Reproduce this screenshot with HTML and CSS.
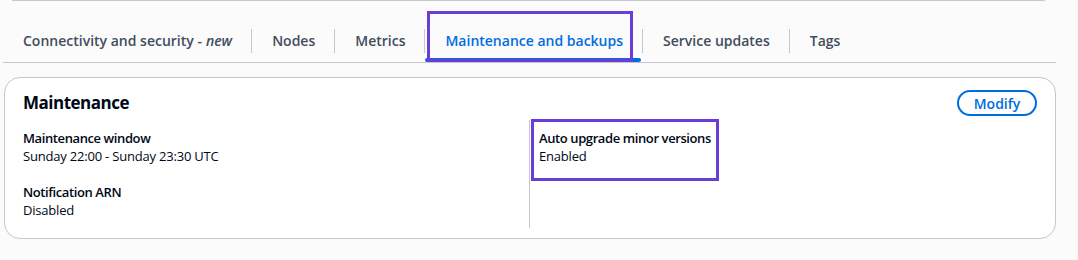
FILE: index.html
```html
<!DOCTYPE html>
<html>
<head>
<meta charset="utf-8">
<link rel="stylesheet" href="styles.css">
</head>
<body>
<div class="prev-edge"></div>
<div class="tabs">
  <div class="tab">Connectivity and security - <em>new</em></div>
  <span class="sep"></span>
  <div class="tab">Nodes</div>
  <span class="sep"></span>
  <div class="tab">Metrics</div>
  <span class="sep"></span>
  <div class="tab active">Maintenance and backups<span class="underline"></span><span class="mark mark-tab"></span></div>
  <span class="sep"></span>
  <div class="tab">Service updates</div>
  <span class="sep"></span>
  <div class="tab">Tags</div>
</div>
<section class="card">
  <div class="card-header">
    <h2>Maintenance</h2>
    <button class="btn">Modify</button>
  </div>
  <div class="columns">
    <div class="col">
      <div class="kv">
        <div class="label">Maintenance window</div>
        <div class="value">Sunday 22:00 - Sunday 23:30 UTC</div>
      </div>
      <div class="kv">
        <div class="label">Notification ARN</div>
        <div class="value">Disabled</div>
      </div>
    </div>
    <div class="col col-right">
      <div class="kv">
        <div class="label">Auto upgrade minor versions</div>
        <div class="value">Enabled</div>
      </div>
      <span class="mark mark-kv"></span>
    </div>
  </div>
</section>
</body>
</html>
```

FILE: styles.css
```css
* { box-sizing: border-box; }
html, body {
  margin: 0;
  padding: 0;
  background: #fbfbfb;
  font-family: "Open Sans", "Liberation Sans", Arial, sans-serif;
  color: #000716;
}
.prev-edge {
  margin-left: 12px;
  width: 1033px;
  height: 1px;
  background: #c6c6cd;
  border-radius: 0 0 2px 0;
}
.tabs {
  display: flex;
  align-items: center;
  margin-left: 3px;
  width: 1053px;
  padding-top: 18px;
  border-bottom: 1px solid #c6c6cd;
}
.tab {
  position: relative;
  height: 43px;
  display: flex;
  align-items: center;
  padding: 0 19px 0 20px;
  font-size: 14px;
  font-weight: 600;
  color: #414d5c;
  white-space: nowrap;
}
.tab em { font-style: italic; margin-left: 4px; }
.tab.active { color: #006ce0; }
.sep {
  width: 1px;
  height: 24px;
  background: #c6c6cd;
}
.underline {
  position: absolute;
  left: 0;
  right: 1px;
  bottom: 0;
  height: 4px;
  border-radius: 2px;
  background: #006ce0;
}
.mark {
  position: absolute;
  border: 3px solid #6a3dd8;
}
.mark-tab {
  left: 2px;
  top: -8px;
  width: 206px;
  height: 51px;
}
.card {
  margin: 14px 0 0 4px;
  width: 1052px;
  height: 162px;
  background: #fff;
  border: 1px solid #c6c6cd;
  border-radius: 16px;
  padding: 12px 18px 0 18px;
}
.card-header {
  display: flex;
  justify-content: space-between;
  align-items: center;
  height: 26px;
}
.card-header h2 {
  margin: 0;
  font-size: 17px;
  font-weight: 700;
  letter-spacing: -0.5px;
  line-height: 26px;
}
.btn {
  width: 80px;
  height: 26px;
  border: 2px solid #006ce0;
  border-radius: 16px;
  background: #fff;
  color: #006ce0;
  font-family: inherit;
  font-size: 14px;
  font-weight: 600;
  padding: 0;
}
.columns {
  display: grid;
  grid-template-columns: 506px 1fr;
  margin-top: 4px;
}
.col {
  padding: 9px 0;
  display: flex;
  flex-direction: column;
  gap: 18px;
}
.col-right {
  position: relative;
  border-left: 1px solid #c6c6cd;
  padding-left: 9px;
}
.kv { font-size: 13px; line-height: 18px; }
.value { letter-spacing: -0.2px; }
.label { font-weight: 600; letter-spacing: -0.4px; }
.mark-kv {
  left: 1px;
  top: -1px;
  width: 188px;
  height: 62px;
}
```
